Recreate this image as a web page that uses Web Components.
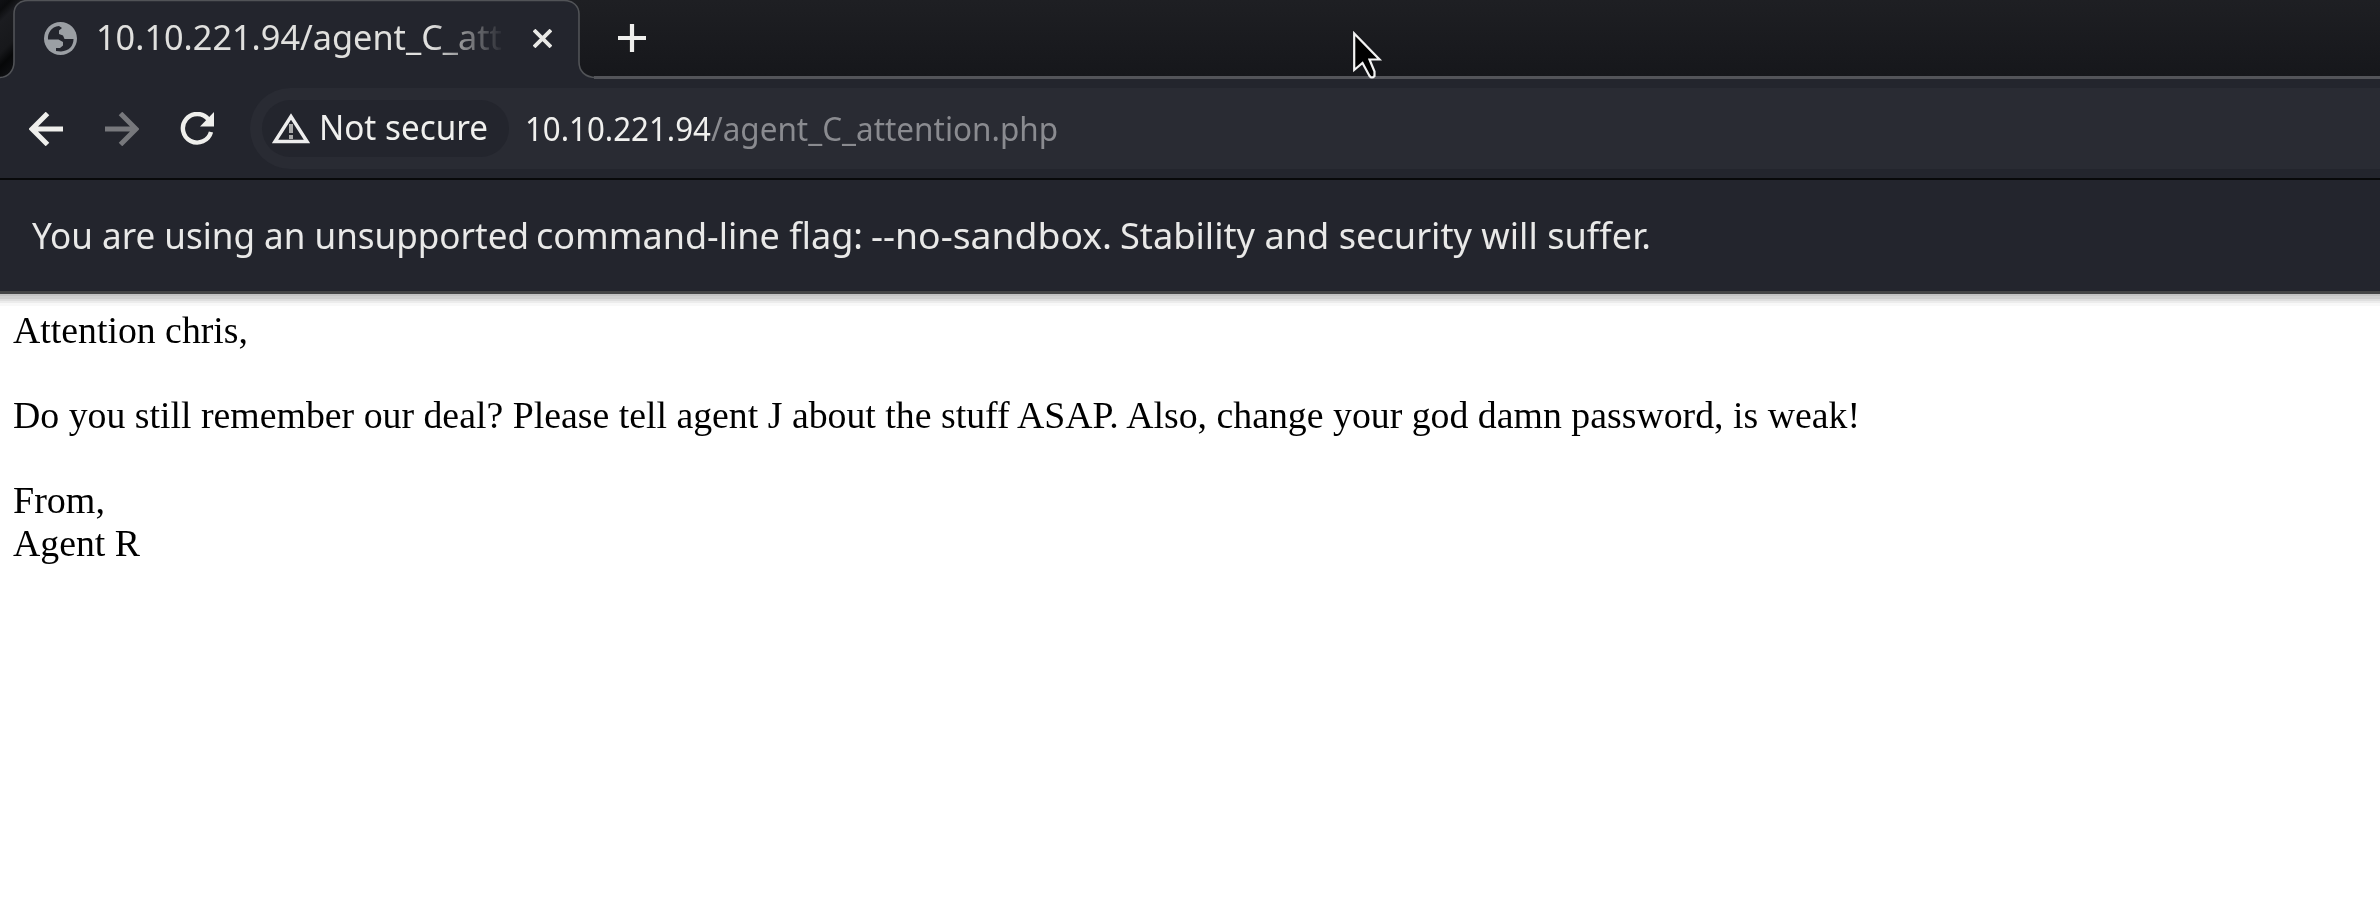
<!DOCTYPE html>
<html lang="en">
<head>
<meta charset="utf-8">
<title>10.10.221.94/agent_C_attention.php</title>
<style>
html,body{margin:0;height:100%;background:#fff;overflow:hidden}
</style>
</head>
<body>
<browser-window></browser-window>
<script>
const define = (name, html, ready) => customElements.define(name, class extends HTMLElement {
  constructor() {
    super();
    const t = document.createElement('template');
    t.innerHTML = html;
    this.attachShadow({ mode: 'open' }).append(t.content.cloneNode(true));
  }
  connectedCallback() { if (ready) ready(this); }
});

/* One line of text set to an exact advance width. */
define('fit-line', `<style>
:host{display:block;white-space:nowrap;flex:none}
span{display:inline-block;transform-origin:0 50%}
</style><span><slot></slot></span>`, el => {
  const span = el.shadowRoot.querySelector('span');
  const w = +el.getAttribute('width');
  el.style.width = w + 'px';
  span.style.transform = 'scaleX(' + w / span.getBoundingClientRect().width + ')';
});

define('tab-strip', `<style>
:host{display:block;height:79px;position:relative;background:linear-gradient(#1e1f23,#16171b 76px);font:34px/75px "Noto Sans",sans-serif;color:#e0e0de}
.shape{position:absolute;inset:0;width:2380px;height:79px}
.row{position:relative;display:flex;align-items:center;height:76px;padding-left:44px}
.title{width:411px;margin-left:19px;height:76px;-webkit-mask-image:linear-gradient(90deg,#000 335px,transparent 409px)}
svg{display:block;flex:none}
.close{margin-left:26px}
.plus{margin-left:66px}
</style>
<svg class="shape" viewBox="0 0 2380 79">
<defs><linearGradient id="g" x1="0" y1="0" x2="0.35" y2="1"><stop offset="0" stop-color="#101114"/><stop offset=".12" stop-color="#0b0c0e"/><stop offset=".25" stop-color="#1b1c20"/><stop offset=".6" stop-color="#17181b"/><stop offset=".75" stop-color="#060708"/><stop offset="1" stop-color="#121316"/></linearGradient></defs>
<path fill="url(#g)" d="M0 0H28V79H0z"/>
<path fill="#23252d" d="M0 77.500C8 77 14 71 14 62V14C14 6 19 .5 28 .5H564C573 .5 579 6 579 14V62C579 71 585 77.500 594 77.500V79H0z"/>
<path fill="none" stroke="#515357" stroke-width="1.600" d="M0 77.500C8 77 14 71 14 62V14C14 6 19 .5 28 .5H564C573 .5 579 6 579 14V62C579 71 585 77.500 596 77.500"/>
<path fill="#535459" d="M594 76H2380V79H594z"/>
</svg>
<div class="row">
<svg width="33" height="33" viewBox="0 0 33 33"><circle cx="16.500" cy="16.500" r="16.500" fill="#9b9fa4"/><path fill="#23252d" d="M15 4L18 6L15 8.500V12L19 13.500L20.500 17H29.500C29.500 24 25 29 17 29.500L12 29V26H16L19 23.500V20L14.500 17.500H4C3.500 11 7 5 15 4z"/></svg>
<div class="title"><fit-line width="406">10.10.221.94/agent_C_att</fit-line></div>
<svg class="close" width="19" height="19" viewBox="0 0 18 18" stroke="#e9e9e6" stroke-width="3.600"><path d="M1 1L17 17M17 1L1 17"/></svg>
<svg class="plus" width="28" height="28" viewBox="0 0 28 28" stroke="#efefed" stroke-width="4.200"><path d="M14 0V28M0 14H28"/></svg>
</div>`);

define('url-field', `<style>
:host{display:flex;align-items:center;flex:1;height:81px;border-radius:41px 0 0 41px;background:#292b33;box-sizing:border-box;padding-left:12px}
.chip{display:flex;align-items:center;width:247px;height:57px;border-radius:29px;background:#23252d;box-sizing:border-box;padding-left:10px}
.chip fit-line{font:35px/54px "Noto Sans",sans-serif;height:57px;color:#f0f0ee;margin-left:9px}
.url{display:flex;font:32px/57px "Noto Sans",sans-serif;height:57px;color:#f0f0ee;margin-left:16px}
.path{color:#8a8b90}
svg{display:block;flex:none}
</style>
<div class="chip"><svg width="38" height="31" viewBox="0 0 38 31"><path fill="none" stroke="#eee" stroke-width="3.400" d="M19 3.500L35 28.500H3z"/><path stroke="#aaa" stroke-width="4" d="M19 11V20M19 22V26"/></svg><fit-line width="169">Not secure</fit-line></div>
<div class="url"><fit-line width="186">10.10.221.94</fit-line><fit-line class="path" width="347">/agent_C_attention.php</fit-line></div>`);

define('tool-bar', `<style>
:host{display:flex;align-items:center;height:99px;background:#23252d;border-bottom:2px solid #08090a;padding-left:29px}
svg{display:block;flex:none}
.f{margin-left:42px}.r{margin-left:41px;margin-right:36px}
</style>
<svg width="34" height="34" viewBox="0 0 34 34" fill="none" stroke="#efefec" stroke-width="5"><path d="M34 17H4M18.500 1.500L3 17L18.500 32.500"/></svg>
<svg class="f" width="34" height="34" viewBox="0 0 34 34" fill="none" stroke="#77787c" stroke-width="5"><path d="M0 17H30M15.500 1.500L31 17L15.500 32.500"/></svg>
<svg class="r" width="34" height="34" viewBox="0 0 34 34" fill="none" stroke="#efefec" stroke-width="4.400"><path d="M28.500 7.500A14.300 14.300 0 1 0 31 20"/><path fill="#efefec" stroke="none" d="M34 0V14.500H20z"/></svg>
<url-field></url-field>`);

define('info-bar', `<style>
:host{display:flex;height:111px;background:#23252d;padding-left:32px;border-bottom:3px solid #454647;font:36.500px/111px "Noto Sans",sans-serif;color:#e9e9e8}
.a{margin-left:7px}.b{margin-left:8px}.c{margin-left:8px}
</style><fit-line width="497">You are using an unsupported</fit-line>
<fit-line class="a" width="327">command-line flag:</fit-line>
<fit-line class="b" width="241">--no-sandbox.</fit-line>
<fit-line class="c" width="531">Stability and security will suffer.</fit-line>`);

define('page-view', `<style>
:host{display:block;background:linear-gradient(#c4c4c4 0 2px,#d0d0d0 2px 5px,#dfdfdf 5px 7px,#ececec 7px 9px,#f8f8f8 9px 12px,#fff 12px);height:624px;box-sizing:border-box;padding:15.700px 0 0 13px;font:37.330px/42.670px "Liberation Serif",serif;color:#000}
.gap{height:42.670px}
</style>
<fit-line width="235">Attention chris,</fit-line><div class="gap"></div>
<fit-line width="1847">Do you still remember our deal? Please tell agent J about the stuff ASAP. Also, change your god damn password, is weak!</fit-line><div class="gap"></div>
<fit-line width="92">From,</fit-line>
<fit-line width="127">Agent R</fit-line>`);

define('mouse-pointer', `<style>
:host{position:absolute;left:1352px;top:30px}svg{display:block}
</style><svg width="34" height="54" viewBox="0 0 34 54"><path fill="#000" stroke="#f2f2f2" stroke-width="2.200" d="M2.200 3.500V40L10.500 33L17.500 46Q20 49 22.500 46V41.500L17.500 29.500H27.500z"/></svg>`);

define('browser-window', `<style>:host{display:block;position:relative;width:2380px;height:918px;overflow:hidden}</style>
<tab-strip></tab-strip><tool-bar></tool-bar>
<info-bar></info-bar>
<page-view></page-view><mouse-pointer></mouse-pointer>`);
</script>
</body>
</html>
